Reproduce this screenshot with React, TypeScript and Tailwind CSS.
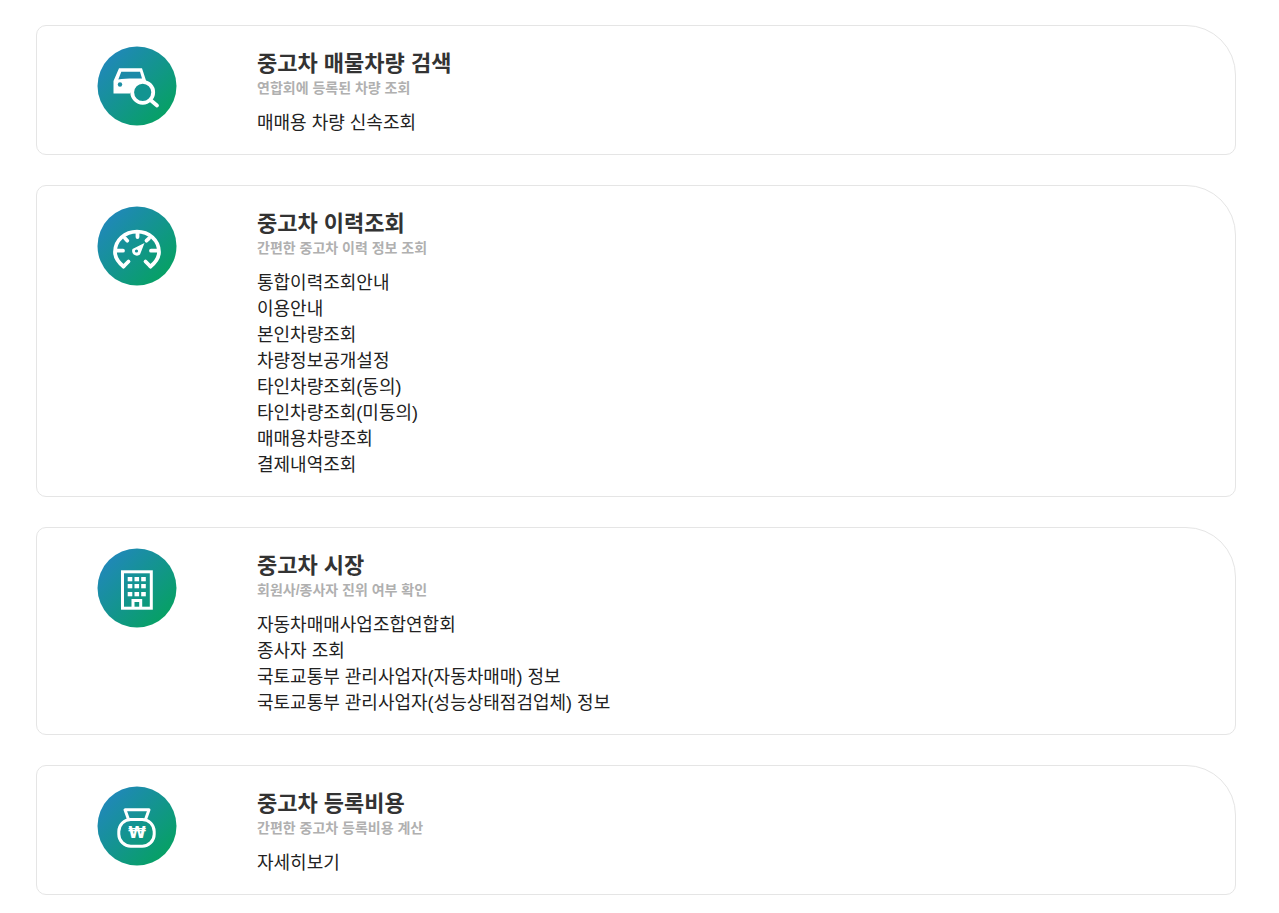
const cards = [
  { title: "중고차 매물차량 검색", sub: "연합회에 등록된 차량 조회", items: ["매매용 차량 신속조회"], icon: "car" },
  { title: "중고차 이력조회", sub: "간편한 중고차 이력 정보 조회", items: ["통합이력조회안내", "이용안내", "본인차량조회", "차량정보공개설정", "타인차량조회(동의)", "타인차량조회(미동의)", "매매용차량조회", "결제내역조회"], icon: "gauge" },
  { title: "중고차 시장", sub: "회원사/종사자 진위 여부 확인", items: ["자동차매매사업조합연합회", "종사자 조회", "국토교통부 관리사업자(자동차매매) 정보", "국토교통부 관리사업자(성능상태점검업체) 정보"], icon: "building" },
  { title: "중고차 등록비용", sub: "간편한 중고차 등록비용 계산", items: ["자세히보기"], icon: "money" },
];

function Icon({ name }: { name: string }) {
  const c = { fill: "none", stroke: "#fff", strokeWidth: 3, strokeLinecap: "round" as const, strokeLinejoin: "round" as const };
  return (
    <svg viewBox="0 0 80 80" width="80" height="80" className="block">
      <defs>
        <linearGradient id={`g-${name}`} x1="0.12" y1="0.15" x2="0.85" y2="0.85">
          <stop offset="0" stopColor="#2088b8" />
          <stop offset="1" stopColor="#07a066" />
        </linearGradient>
      </defs>
      <circle cx="40" cy="40" r="39.5" fill={`url(#g-${name})`} />
      {name === "car" && (
        <g>
          <path d="M16.5 47.5V35L22 22.3H45L49.5 36H40L33 47.5Z" fill="#fff" />
          <path d="M24.3 25.7H43L45 32.5H37C31 32.5 25 32.8 21.3 33.5Z" fill="#1d8aa8" />
          <circle cx="23" cy="38.5" r="2.2" fill="#1c8ea4" />
          <circle cx="45.7" cy="46.3" r="10.5" fill="#129491" stroke="#fff" strokeWidth="3.8" />
          <path d="M54 54.5L60 59.5" stroke="#fff" strokeWidth="3.8" strokeLinecap="round" />
        </g>
      )}
      {name === "gauge" && (
        <g {...c} strokeWidth={3.8}>
          <path d="M26.5 60.5C21 56 18 50.5 18 46C18 34 28 25.7 40 25.7C52 25.7 62 34 62 46C62 50.5 59 56 53.5 60.5" />
          <path d="M26.5 60.5L31.5 55.5M53.5 60.5L48.5 55.5" />
          <path d="M40.5 26V31M28 32.3L30.3 34.7M52 32.3L49.5 34.7M19 44.7H26M54 44.7H61" />
          <path d="M35.5 43L47.5 37L43 48.5C41.5 50 38.5 50 36.7 48.5C35 47 34.7 44.7 35.5 43Z" fill="#fff" stroke="none" />
          <circle cx="39.5" cy="45" r="1.6" fill="#15919a" stroke="none" />
        </g>
      )}
      {name === "building" && (
        <g>
          <rect x="25.5" y="23.8" width="28.8" height="36.4" fill="none" stroke="#fff" strokeWidth="3" />
          {[29, 36, 44].map((y) =>
            [30.7, 37.5, 44.2].map((x) => <rect key={`${x}-${y}`} x={x} y={y} width="4.6" height="4.3" fill="#fff" />)
          )}
          <path d="M36 60V52.5H43.7V60" fill="none" stroke="#fff" strokeWidth="3" />
        </g>
      )}
      {name === "money" && (
        <g>
          <rect x="21.8" y="33.5" width="35.4" height="26.7" rx="12" {...c} />
          <path d="M31.5 33.5L28 23.8H52L48.5 33.5" {...c} />
          <text x="40" y="52.3" textAnchor="middle" fontSize="16" fontWeight="700" fill="#fff" fontFamily="'DejaVu Sans', sans-serif">₩</text>
        </g>
      )}
    </svg>
  );
}

export default function App() {
  return (
    <div className="min-h-[913px] bg-white px-9 pt-[25px] pb-[18px] font-['Liberation_Sans','Noto_Sans_CJK_KR',sans-serif]">
      <div className="flex w-[1200px] flex-col gap-[30px]">
        {cards.map((card) => (
          <section key={card.title} className="flex rounded-[10px] rounded-tr-[50px] border border-[#e5e5e5] bg-white pt-5 pb-[18px] pl-[60px]">
            <div className="w-[160px] shrink-0">
              <Icon name={card.icon} />
            </div>
            <div>
              <h2 className="pt-1 text-[22px] leading-[28px] font-bold text-[#333]">{card.title}</h2>
              <p className="mb-[12px] text-[14px] leading-[20px] font-bold text-[#b0b0b0]">{card.sub}</p>
              <ul>
                {card.items.map((item) => (
                  <li key={item} className="text-[18px] leading-[26px] text-[#222]">{item}</li>
                ))}
              </ul>
            </div>
          </section>
        ))}
      </div>
    </div>
  );
}
